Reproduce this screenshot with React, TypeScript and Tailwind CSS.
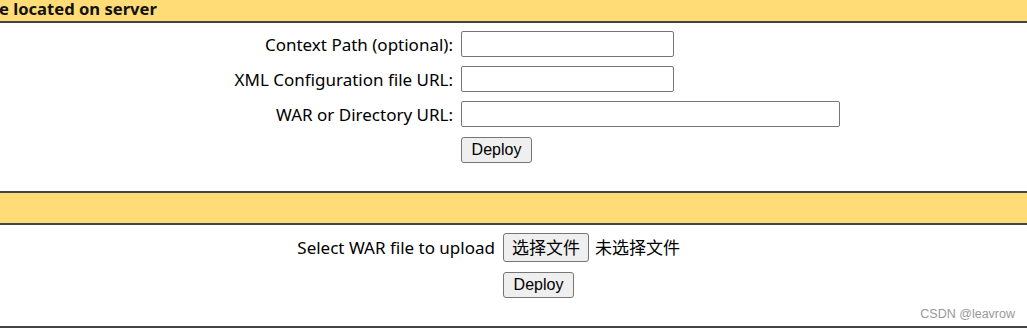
import React from "react"

const sans = "font-['Noto_Sans','Noto_Sans_CJK_SC',sans-serif]"
const btn =
  "h-[26px] rounded-[3px] border border-[#767676] bg-[#efefef] px-[6px] text-[16px] leading-none text-black font-['Liberation_Sans',Arial,sans-serif]"
const field = "h-[26px] rounded-[2px] border border-[#767676] bg-white"
const label = "h-[26px] text-right leading-[28px]"

export default function App() {
  return (
    <div className={`relative h-[330px] w-[1027px] overflow-hidden bg-white text-black ${sans}`}>
      {/* deploy from server section */}
      <div className="flex h-[21px] items-center overflow-hidden whitespace-nowrap bg-[#ffdc75] pb-[2px] text-[16.6px] font-bold text-[#111]">
        <span className="-ml-[1px]">e located on server</span>
      </div>
      <div className="h-[2px] bg-[#444]" />

      <div className="grid grid-cols-[453px_auto] items-center gap-x-2 gap-y-[9px] pt-[8px] text-[17px]">
        <label className={label}>Context Path (optional):</label>
        <input className={`${field} w-[213px]`} />
        <label className={label}>XML Configuration file URL:</label>
        <input className={`${field} w-[213px]`} />
        <label className={label}>WAR or Directory URL:</label>
        <input className={`${field} w-[379px]`} />
        <span />
        <div className="h-[26px]">
          <button className={`${btn} w-[71px]`}>Deploy</button>
        </div>
      </div>

      {/* upload section */}
      <div className="mt-[29px] h-[2px] bg-[#444]" />
      <div className="h-[30px] bg-[#ffdc75]" />
      <div className="h-[2px] bg-[#444]" />

      <div className="grid grid-cols-[495px_auto] items-center gap-x-2 gap-y-[9px] pt-[8px] text-[17px]">
        <span className="h-[29px] text-right leading-[30px]">Select WAR file to upload</span>
        <div className="flex h-[29px] items-center">
          <button className={`${btn} h-[29px] w-[86px] text-[17px] ${sans}`}>选择文件</button>
          <span className="ml-[6px]">未选择文件</span>
        </div>
        <span />
        <div className="h-[26px]">
          <button className={`${btn} w-[71px]`}>Deploy</button>
        </div>
      </div>

      <div className="absolute bottom-[6px] right-[12px] text-[12.5px] text-[#999] font-['Liberation_Sans',Arial,sans-serif]">
        CSDN @leavrow
      </div>
      <div className="absolute bottom-[2px] left-0 right-0 h-[2px] bg-[#444]" />
    </div>
  )
}
